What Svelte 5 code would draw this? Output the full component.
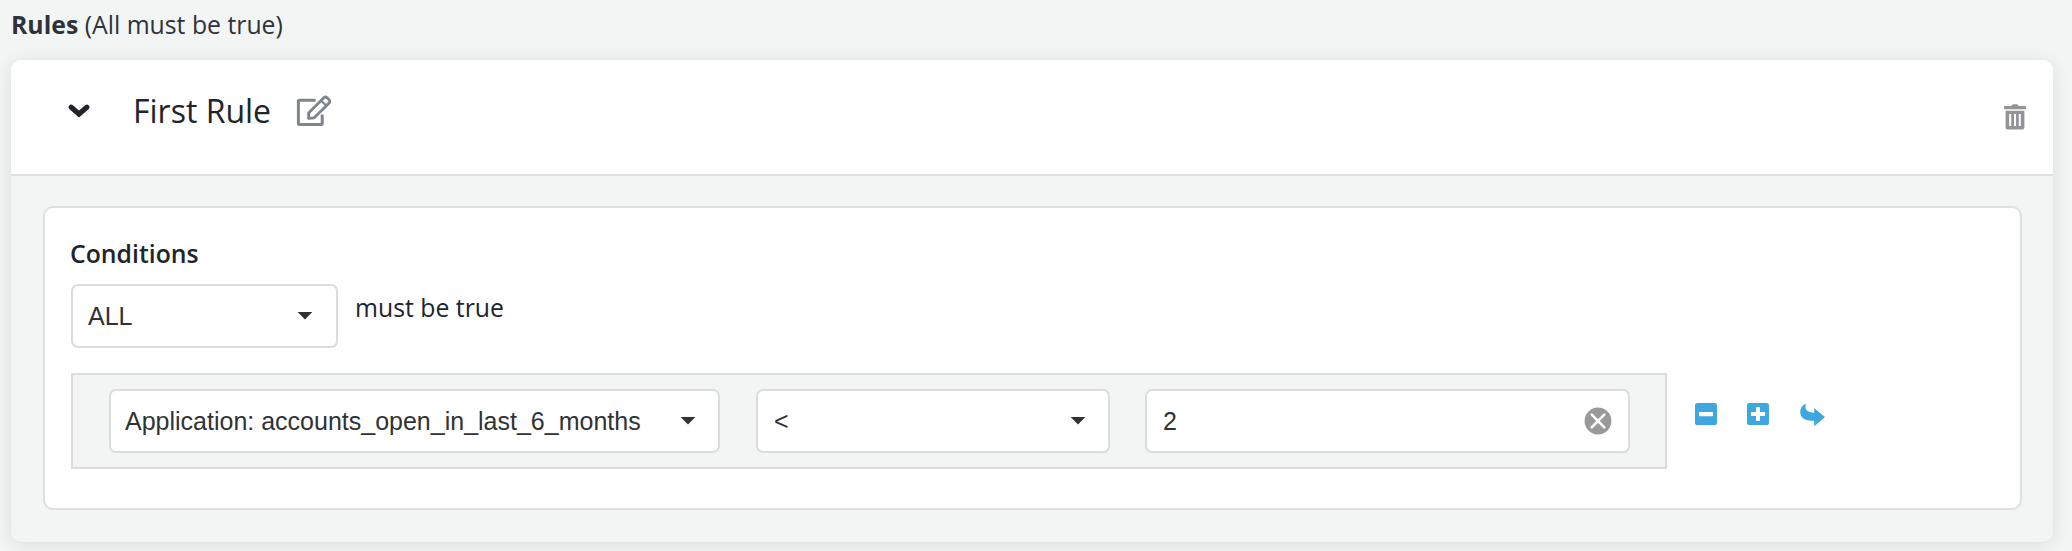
<script>
  let { title = 'First Rule' } = $props();
  const fields = [
    { text: 'Application: accounts_open_in_last_6_months', kind: 'property' },
    { text: '<', kind: 'operator' }
  ];
</script>

{#snippet caret()}
  <svg class="caret" width="16" height="8" viewBox="0 0 16 8"><path d="M.6 0h14.8L8 7.6z" fill="#303233" /></svg>
{/snippet}

<main>
  <div class="heading"><b>Rules</b> <span>(All must be true)</span></div>
  <section class="card">
    <header>
      <svg class="chevron" width="22" height="14" viewBox="0 0 22 14"><path d="M3.2 3.2 11 10l7.8-6.800" fill="none" stroke="#21252b" stroke-width="5.2" stroke-linecap="round" stroke-linejoin="miter" /></svg>
      <h2>{title}</h2>
      <svg class="edit" width="36" height="32" viewBox="0 0 36 32" fill="none" stroke="#7f858c" stroke-width="3" stroke-linejoin="round" stroke-linecap="butt">
        <path d="M19.6 5.2H3.4a1 1 0 0 0-1 1v22.2a1 1 0 0 0 1 1h21.8a1 1 0 0 0 1-1V19.4" />
        <path d="M12.6 23.4v-5.5L27.6 2.9q1.8-1.7 3.6 0l1.7 1.7q1.8 1.8 0 3.6L17.9 22.9z" stroke-width="2.8" />
        <path d="m25 5.5 5.3 5.3" stroke-width="2.2" />
      </svg>
      <svg class="trash" width="22" height="26" viewBox="0 0 22 26" fill="#939498">
        <path d="M1 2h6.2L8.2.7Q8.6.2 9.2.2h3.6q.6 0 1 .5l1 1.3H21a1 1 0 0 1 1 1v1.3a1 1 0 0 1-1 1H1a1 1 0 0 1-1-1V3a1 1 0 0 1 1-1z" />
        <path fill-rule="evenodd" d="M1.6 6.8h18.8V23a2.6 2.6 0 0 1-2.6 2.6H4.2A2.6 2.6 0 0 1 1.6 23zM5.2 10v12h2V10zM10 10v12h2V10zM14.8 10v12h2V10z" />
      </svg>
    </header>
    <div class="body">
      <div class="panel">
        <h3>Conditions</h3>
        <div class="scope">
          <div class="control all"><span>ALL</span>{@render caret()}</div>
          <span class="must">must be true</span>
        </div>
        <div class="line">
          <div class="row">
            {#each fields as f}
              <div class="control {f.kind}"><span>{f.text}</span>{@render caret()}</div>
            {/each}
            <div class="control value">
              <span>2</span>
              <svg class="clear" width="28" height="28" viewBox="0 0 28 28"><circle cx="14" cy="14" r="13.4" fill="#999" /><path d="m7.7 7.7 12.6 12.6M20.3 7.7 7.7 20.3" stroke="#fff" stroke-width="2.6" stroke-linecap="round" /></svg>
            </div>
          </div>
          <div class="actions">
            <svg width="22" height="22" viewBox="0 0 22 22"><rect width="22" height="22" rx="2.6" fill="#3fa7df" /><rect x="3.9" y="9" width="14.2" height="4.2" rx=".8" fill="#fff" /></svg>
            <svg width="22" height="22" viewBox="0 0 22 22"><rect width="22" height="22" rx="2.6" fill="#3fa7df" /><path d="M9.9 4h2.2q.9 0 .9.9V9h4.2q.9 0 .9.9v2.2q0 .9-.9.9H13v4.2q0 .9-.9.9H9.9q-.9 0-.9-.9V13H4.8q-.9 0-.9-.9V9.900q0-.9.9-.9H9V4.900q0-.9.900-.9z" fill="#fff" /></svg>
            <svg class="arrow" width="26" height="24" viewBox="0 0 26 24"><path d="M4.900 1.200C5.900.7 6.100 1.200 5.700 2.100 4.600 6.700 7.500 9.700 14.200 9.700V6.200Q14.200 5 15.200 5.900L25 14 15.200 22.500Q14.200 23.300 14.200 22V17.800C5.500 18 .2 15.200.2 8.700.2 5.400 2 2.600 4.900 1.200Z" fill="#3fa7df" /></svg>
          </div>
        </div>
      </div>
    </div>
  </section>
</main>

<style>
  :global(body) { margin: 0; background: #f3f5f5; overflow: hidden; }
  main, main * { box-sizing: border-box; }
  main {
    height: 551px;
    overflow: hidden;
    padding: 0 19px 0 11px;
    background: #f3f5f5;
    font: 25px/34px "Open Sans", "Noto Sans", sans-serif;
    color: #21252b;
  }
  svg { display: block; flex: none; }
  .heading { height: 60px; line-height: 48px; font-size: 24.8px; color: #2f323a; white-space: nowrap; }
  .card {
    height: 482px;
    border-radius: 10px;
    background: #f3f5f5;
    box-shadow: 0 2px 18px rgba(0, 0, 0, .1);
    overflow: hidden;
  }
  header {
    height: 116px;
    display: flex;
    align-items: flex-start;
    padding: 0 27px 0 57px;
    background: #fff;
    border-bottom: 2px solid #dedfdf;
  }
  .chevron { margin-top: 44px; }
  h2 { margin: 29px 0 0 43px; font-size: 32px; line-height: 44px; font-weight: 400; }
  .edit { margin: 35px 0 0 25px; }
  .trash { margin: 44px 0 0 auto; }
  .body { padding: 30px 31px 0 32px; }
  .panel {
    height: 304px;
    padding: 28px 26px 0;
    border: 2px solid #dedfdf;
    border-radius: 10px;
    background: #fff;
  }
  h3 { margin: 0 0 14px -1px; font-size: 24.8px; line-height: 34px; font-weight: 600; }
  .scope { display: flex; align-items: flex-start; height: 89px; }
  .must { margin: 5px 0 0 17px; line-height: 36px; font-size: 24.8px; }
  .control {
    display: flex;
    align-items: center;
    justify-content: space-between;
    height: 64px;
    padding: 0 22px 0 15px;
    border: 2px solid #dbdcdc;
    border-radius: 7px;
    background: #fff;
    color: #303233;
    font-family: "Liberation Sans", Arial, sans-serif;
    font-size: 25px;
    line-height: 30px;
    white-space: nowrap;
  }
  .all { width: 267px; padding-right: 23px; }
  .line { display: flex; align-items: flex-start; }
  .row {
    display: flex;
    gap: 36px;
    width: 1596px;
    height: 96px;
    padding: 14px 35px 14px 36px;
    border: 2px solid #dbdcdc;
    background: #f3f5f5;
  }
  .property { width: 611px; padding-left: 14px; }
  .operator { width: 354px; }
  .operator span { padding-left: 1px; }
  .value { flex: 1; margin-left: -1px; padding: 0 16px; }
  .actions { display: flex; gap: 30px; margin: 30px 0 0 28px; }
  .arrow { margin-left: 1px; }
</style>
